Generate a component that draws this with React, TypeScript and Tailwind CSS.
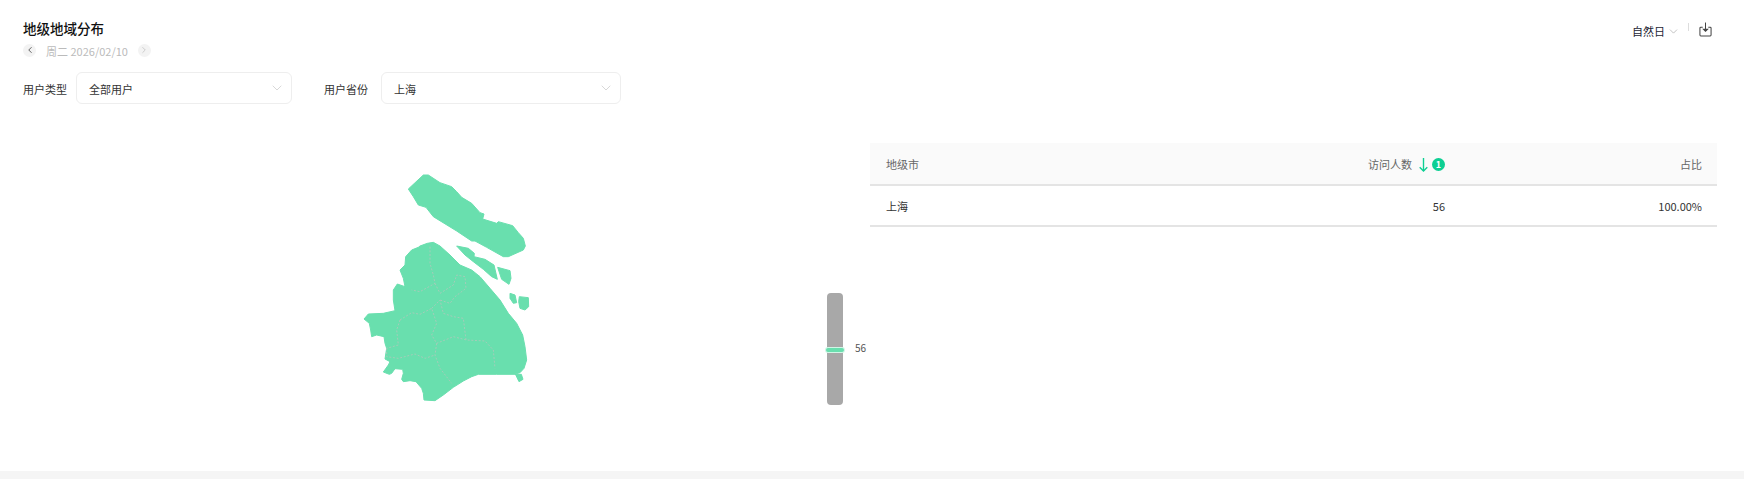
import React from "react";
import { ChevronDown, ChevronLeft, ChevronRight } from "lucide-react";

const font = { fontFamily: '"Noto Sans CJK SC", "Noto Sans", sans-serif' };

const shapes = [
  // chongming
  "M205 87 250 45 265 45 300 68 335 80 350 95 365 112 395 130 420 158 432 162 428 177 470 190 475 185 518 197 535 218 550 235 556 258 550 270 505 290 490 290 440 262 405 243 395 243 350 213 280 170 258 142 235 135 220 110Z",
  // changxing
  "M350 258 385 265 403 280 402 290 435 298 462 315 472 358 455 350 430 328 400 305 375 285Z",
  // hengsha
  "M473 322 510 332 513 355 507 373 485 358Z",
  "M510 400 525 405 530 428 520 430 510 415Z",
  "M538 410 565 413 566 440 555 450 540 445 536 425Z",
  // mainland
  "M280 247 300 258 330 285 360 315 395 330 420 350 450 385 480 420 505 460 530 490 548 525 555 560 560 600 552 625 540 638 526 642 537 665 549 658 544 643 470 643 415 643 395 650 370 663 340 682 310 705 285 722 252 720 250 700 245 685 228 665 210 662 190 665 185 658 190 640 188 628 165 626 155 640 148 643 130 636 145 615 150 605 135 597 140 565 135 550 132 530 110 525 95 530 92 510 88 490 72 477 85 462 130 460 165 452 160 420 160 390 172 372 195 380 190 355 180 330 195 315 197 290 215 270 235 262 240 258 262 250Z",
];

const districts = [
  "M270 260 270 310 280 345 285 370 240 395 215 390",
  "M180 480 215 458 240 463 275 445 290 490 275 525 290 550 340 530 380 540 435 543 460 570 465 625",
  "M290 550 285 585 300 625 335 670",
  "M140 565 140 590 175 595 225 582 255 595 285 585",
  "M180 480 170 510 175 555 140 565",
  "M275 445 300 420 310 460 340 470 370 475 378 540",
  "M285 370 300 400 340 375 350 345 375 350 378 385 345 410 330 430 300 420",
];

const ShanghaiMap = () => (
  <svg viewBox="0 0 660 750" className="w-[220px] h-[250px] shrink-0">
    {shapes.map((d, i) => (
      <path key={i} d={d} fill="#69dfae" stroke="#69dfae" strokeLinejoin="round" strokeWidth={3} />
    ))}
    {districts.map((d, i) => (
      <path key={i} d={d} fill="none" stroke="#a3cdb9" strokeWidth={3} strokeDasharray="6 5" />
    ))}
  </svg>
);

const Select = ({ value, width }: { value: string; width: string }) => (
  <div className={`${width} h-[32px] flex items-center justify-between pl-[12px] pr-[6px] bg-white border border-[#eeeeee] rounded-md`}>
    <span className="text-[11px] pt-[2px] text-[#333333]">{value}</span>
    <ChevronDown className="w-[16px] h-[16px] text-[#c4c4c4]" strokeWidth={1} />
  </div>
);

export default function App() {
  return (
    <div className="h-[479px] bg-[#f5f5f5] overflow-hidden" style={font}>
      <div className="h-[471px] bg-white flex flex-col">
        {/* top bar */}
        <div className="flex justify-between pl-[23px] pr-[32px] pt-[18px]">
          <div className="flex flex-col">
            <h1 className="text-[13.5px] leading-[20px] font-medium text-[#111111]">地级地域分布</h1>
            <div className="flex items-center mt-[6px] h-[14px] text-[11px] text-[#bbbbbb]">
              <span className="w-[13px] h-[13px] -mt-[2px] rounded-full bg-[#f3f3f3] flex items-center justify-center">
                <ChevronLeft className="w-[10px] h-[10px] text-[#444444]" />
              </span>
              <span className="ml-[10px]">周二 2026/02/10</span>
              <span className="ml-[10px] -mt-[2px] w-[13px] h-[13px] rounded-full bg-[#f3f3f3] flex items-center justify-center">
                <ChevronRight className="w-[10px] h-[10px] text-[#c4c4c4]" />
              </span>
            </div>
          </div>
          <div className="flex items-start pt-[4px]">
            <span className="text-[11px] leading-[18px] text-[#1d2433]">自然日</span>
            <ChevronDown className="w-[13px] h-[13px] mt-[3px] ml-[2px] text-[#999999]" strokeWidth={1.1} />
            <div className="w-px h-[8px] mt-[1px] ml-[8px] bg-[#dddddd]" />
            <svg viewBox="0 0 14 16" className="w-[13px] h-[15px] ml-[10px]" fill="none" stroke="#444444" strokeWidth="1.1">
              <path d="M4 5.500H2a1 1 0 0 0-1 1v7.500a1 1 0 0 0 1 1h10a1 1 0 0 0 1-1V6.500a1 1 0 0 0-1-1h-2" />
              <path d="M7 .5v7.500" />
              <path d="M4.700 7.700 7 10l2.300-2.300Z" fill="#444444" />
            </svg>
          </div>
        </div>

        {/* filters */}
        <div className="flex items-center pl-[23px] mt-[14px]">
          <span className="text-[11px] pt-[2px] text-[#333333] w-[53px]">用户类型</span>
          <Select value="全部用户" width="w-[216px]" />
          <span className="text-[11px] pt-[2px] text-[#333333] ml-[32px] w-[57px]">用户省份</span>
          <Select value="上海" width="w-[240px]" />
        </div>

        {/* map + table */}
        <div className="flex mt-[39px]">
          <div className="w-[870px] shrink-0 flex">
            <div className="ml-[340px] mt-[17px]">
              <ShanghaiMap />
            </div>
            <div className="ml-[267px] mt-[150px] flex items-center h-[112px] self-start">
              <div className="relative w-[16px] h-[112px] bg-[#a8a8a8] rounded-sm">
                <div className="absolute left-[-2px] top-[54px] w-[20px] h-[6px] bg-[#69dfae] border border-white/70 rounded-full" />
              </div>
              <span className="ml-[12px] mb-[4px] text-[10px] text-[#555555]">56</span>
            </div>
          </div>
          <div className="w-[847px] shrink-0 self-start">
            <div className="grid grid-cols-[1fr_256px] items-center h-[43px] pt-[2px] bg-[#fafafa] border-b-2 border-[#e4e4e4] pl-4 text-[11px] text-[#666666]">
              <div className="flex justify-between items-center pr-4">
                <span>地级市</span>
                <span className="flex items-center">
                  访问人数
                  <svg viewBox="0 0 9 14" className="w-[9px] h-[14px] ml-[7px]" fill="none" stroke="#0dcf93" strokeWidth="1.4">
                    <path d="M4.500 0v13" />
                    <path d="M.7 9.200 4.500 13l3.800-3.800" />
                  </svg>
                  <span className="ml-[4px] w-[13px] h-[13px] rounded-full bg-[#0dcf93] text-white text-[9px] font-bold leading-none flex items-center justify-center">1</span>
                </span>
              </div>
              <span className="text-right pr-[15px]">占比</span>
            </div>
            <div className="grid grid-cols-[1fr_256px] items-center h-[41px] pt-[2px] border-b-2 border-[#e4e4e4] pl-4 text-[11px] text-[#333333]">
              <div className="flex justify-between items-center pr-4">
                <span>上海</span>
                <span>56</span>
              </div>
              <span className="text-right pr-[15px]">100.00%</span>
            </div>
          </div>
        </div>
      </div>
    </div>
  );
}
